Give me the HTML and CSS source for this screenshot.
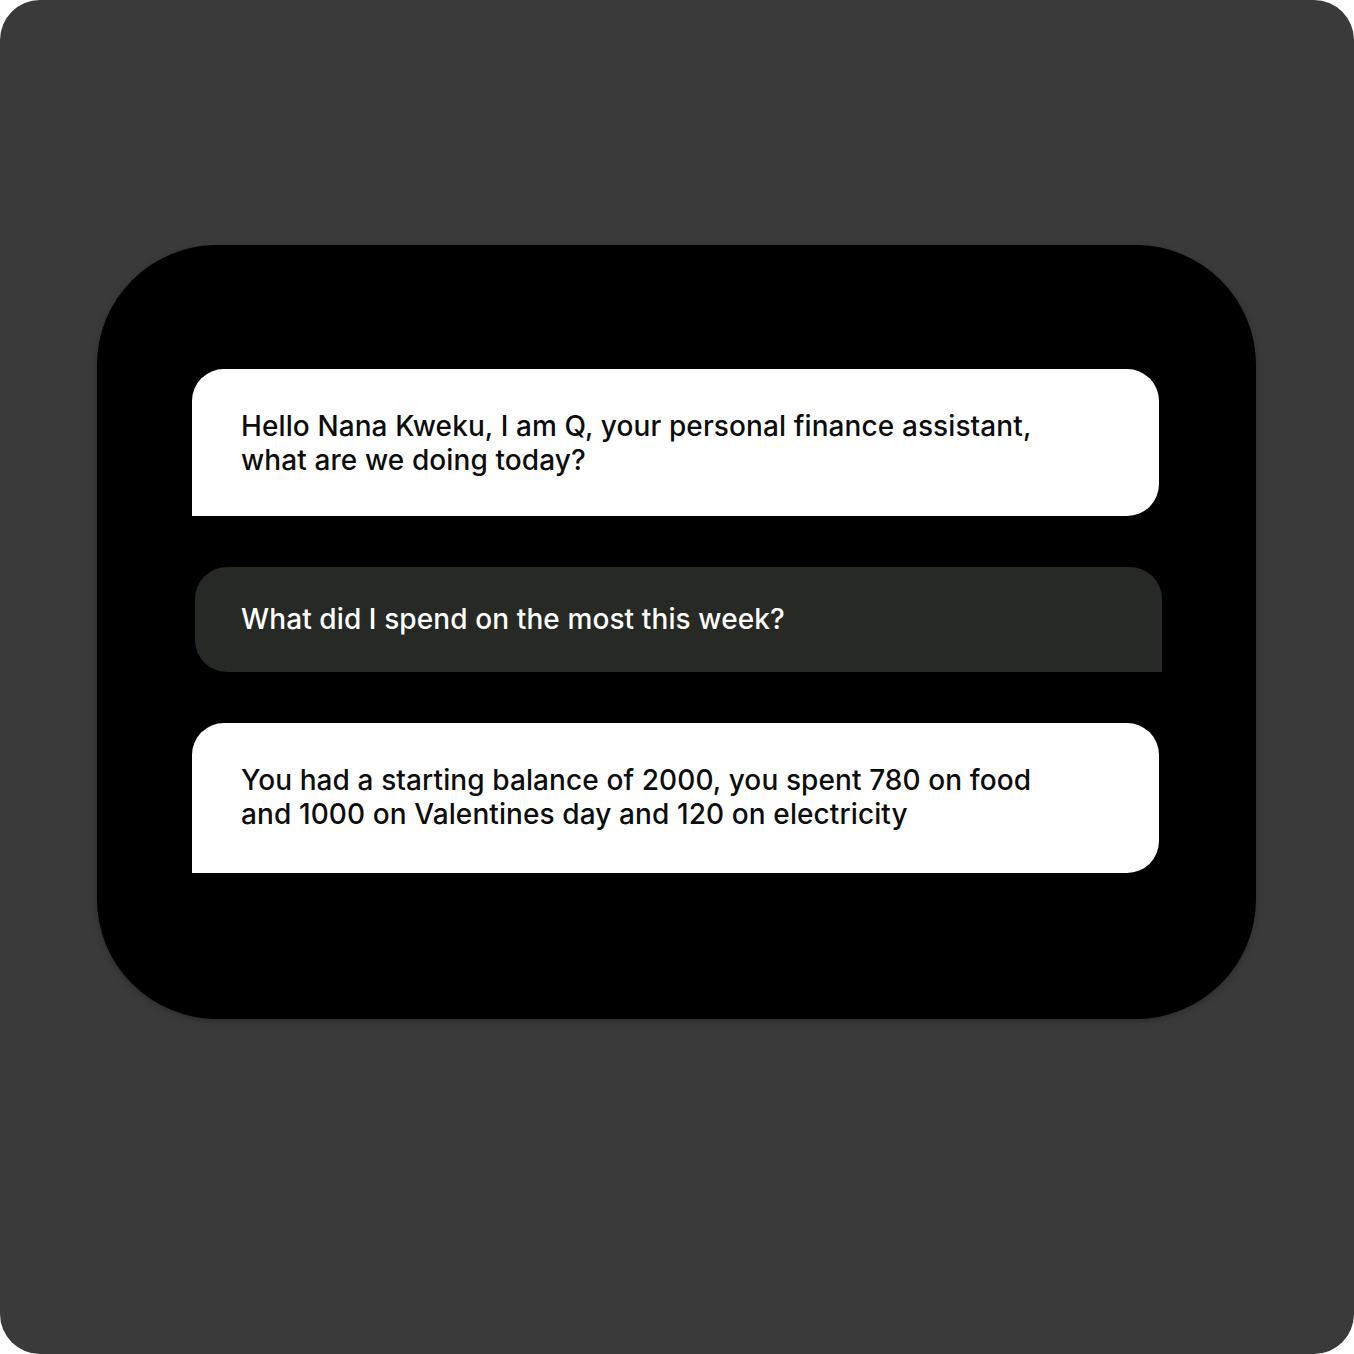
FILE: index.html
```html
<!DOCTYPE html>
<html lang="en">
<head>
    <meta charset="UTF-8">
    <meta name="viewport" content="width=device-width, initial-scale=1.0">
    <title>Q - Finance Assistant</title>
    <link rel="stylesheet" href="styles.css">
</head>
<body>
    <div class="frame">
        <div class="chat-card">
            <!-- Assistant greeting -->
            <div class="bubble bubble-bot">
                <p>Hello Nana Kweku, I am Q, your personal finance assistant,<br>
                what are we doing today?</p>
            </div>

            <!-- User question -->
            <div class="bubble bubble-user">
                <p>What did I spend on the most this week?</p>
            </div>

            <!-- Assistant answer -->
            <div class="bubble bubble-bot bubble-last">
                <p>You had a starting balance of 2000, you spent 780 on food<br>
                and 1000 on Valentines day and 120 on electricity</p>
            </div>
        </div>
    </div>
</body>
</html>
```

FILE: styles.css
```css
* {
    box-sizing: border-box;
    margin: 0;
    padding: 0;
}

body {
    background-color: #ffffff;
    font-family: Inter, 'Noto Sans', sans-serif;
}

.frame {
    width: 1354px;
    height: 1354px;
    background-color: #3a3a3a;
    border-radius: 40px;
    padding: 245px 98px 0 97px;
}

.chat-card {
    width: 1159px;
    height: 774px;
    background: #000000;
    border-radius: 120px;
    padding: 124px 97px 0 95px;
    display: flex;
    flex-direction: column;
    gap: 51px;
    box-shadow: 0 2px 6px rgba(0,0,0,0.25);
}

.bubble {
    width: 967px;
    font-size: 28px;
    line-height: 34px;
    font-weight: 500;
    letter-spacing: 0.1px;
}

.bubble-bot {
    background: #ffffff;
    color: #0d0d0d;
    padding: 40px 49px 39px;
    border-radius: 32px 32px 32px 0;
}

.bubble-last {
    padding-bottom: 42px;
}

.bubble-user {
    background: #272925;
    color: #ffffff;
    margin-left: 3px;
    padding: 35px 46px 36px;
    border-radius: 32px 32px 0 32px;
}
```
